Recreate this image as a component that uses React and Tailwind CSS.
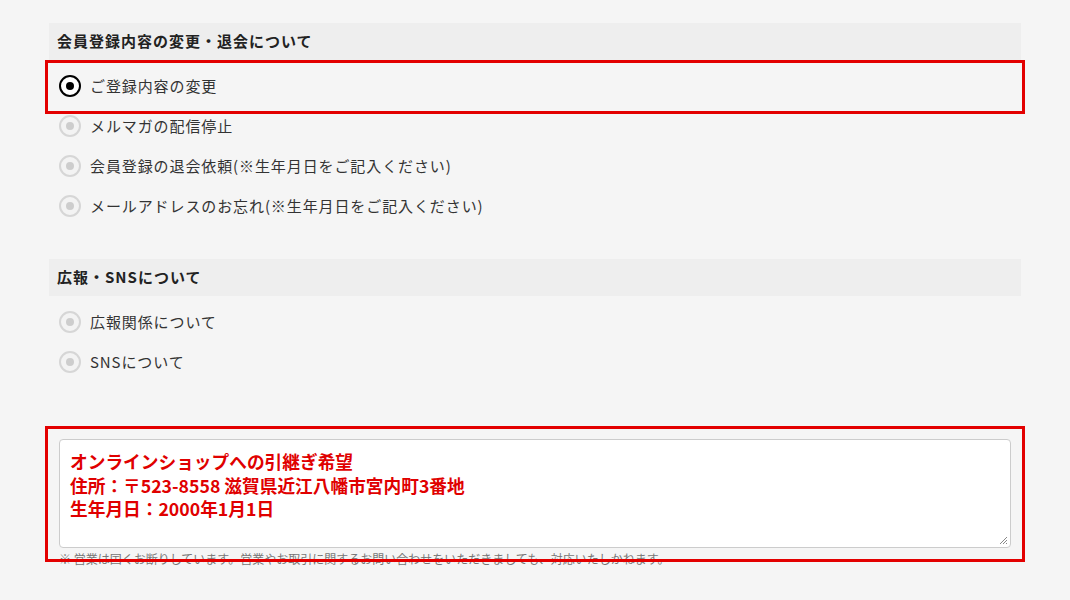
import React from 'react'

const font = { fontFamily: '"Noto Sans CJK JP", "Noto Sans", sans-serif' }

const groups = [
  {
    title: '会員登録内容の変更・退会について',
    items: [
      { label: 'ご登録内容の変更', checked: true },
      { label: 'メルマガの配信停止' },
      { label: '会員登録の退会依頼(※生年月日をご記入ください)' },
      { label: 'メールアドレスのお忘れ(※生年月日をご記入ください)' },
    ],
  },
  {
    title: '広報・SNSについて',
    items: [{ label: '広報関係について' }, { label: 'SNSについて' }],
  },
]

function Radio({ checked }) {
  if (checked) {
    return (
      <span className="w-[22px] h-[22px] rounded-full border-2 border-black bg-white flex items-center justify-center flex-shrink-0">
        <span className="w-2 h-2 rounded-full bg-black" />
      </span>
    )
  }
  return (
    <span className="w-[22px] h-[22px] rounded-full border-2 border-[#d6d6d6] bg-[#f3f3f3] flex items-center justify-center flex-shrink-0">
      <span className="w-2 h-2 rounded-full bg-[#cdcdcd]" />
    </span>
  )
}

export default function App() {
  return (
    <div className="relative w-[1070px] h-[600px] bg-[#f5f5f5] overflow-hidden" style={font}>
      <div className="w-[972px] ml-[49px] pt-[23px] flex flex-col">
        {groups.map((g, gi) => (
          <section key={g.title} className={gi > 0 ? 'mt-[33px]' : ''}>
            <h2 className="h-[37px] bg-[#eeeeee] px-2 flex items-center text-[15px] font-bold text-[#222] tracking-[1px]">
              {g.title}
            </h2>
            <ul className="mt-[6px] flex flex-col">
              {g.items.map((item) => (
                <li key={item.label} className="h-10 pl-[10px] flex items-center gap-[9px]">
                  <Radio checked={item.checked} />
                  <span className="text-[15px] text-[#333] tracking-[0.9px]">{item.label}</span>
                </li>
              ))}
            </ul>
          </section>
        ))}

        {/* message textarea */}
        <div className="mt-[57px] pl-[10px] pr-[10px]">
          <div className="relative h-[109px] bg-white border border-[#cccccc] rounded px-[10px] pt-[10px] text-[17.7px] font-bold text-[#e00000] leading-[23.5px]">
            <div>オンラインショップへの引継ぎ希望</div>
            <div>住所：〒523-8558 滋賀県近江八幡市宮内町3番地</div>
            <div>生年月日：2000年1月1日</div>
            {/* resize grip */}
            <svg className="absolute right-[2px] bottom-[2px]" width="9" height="9" viewBox="0 0 9 9">
              <path d="M8 1 L1 8 M8 4 L4 8 M8 7 L7 8" stroke="#888" strokeWidth="1" fill="none" />
            </svg>
          </div>
          <p className="mt-[3px] text-[12px] text-[#777] leading-[16px]">
            ※ 営業は固くお断りしています。営業やお取引に関するお問い合わせをいただきましても、対応いたしかねます。
          </p>
        </div>
      </div>

      {/* highlight frames */}
      <div className="absolute left-[45px] top-[60px] w-[980px] h-[54px] border-[3px] border-[#e30000] pointer-events-none" />
      <div className="absolute left-[45px] top-[426px] w-[980px] h-[136px] border-[3px] border-[#e30000] pointer-events-none" />
    </div>
  )
}
